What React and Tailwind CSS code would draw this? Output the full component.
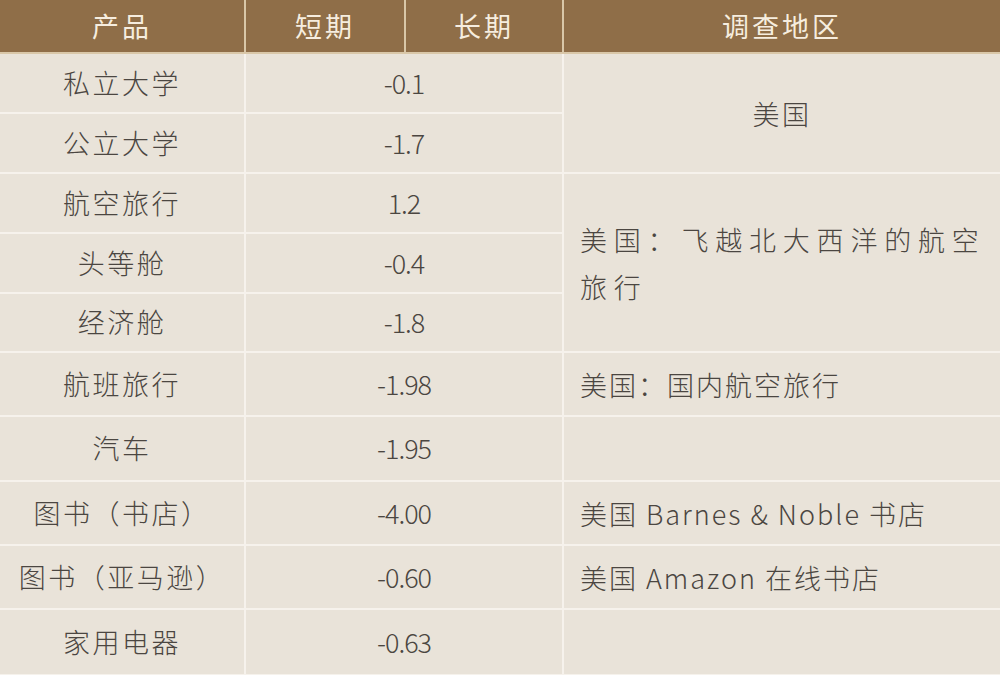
import React from 'react';

const rows = [
  { name: '私立大学', v: '-0.1', h: 'h-[60px]', region: { text: '美国', span: 2, center: true } },
  { name: '公立大学', v: '-1.7', h: 'h-[60px]' },
  { name: '航空旅行', v: '1.2', h: 'h-[60px]', region: { text: '美国：飞越北大西洋的航空旅行', span: 3, wide: true } },
  { name: '头等舱', v: '-0.4', h: 'h-[60px]' },
  { name: '经济舱', v: '-1.8', h: 'h-[59px]' },
  { name: '航班旅行', v: '-1.98', h: 'h-[64px]', region: { text: '美国：国内航空旅行', span: 1 } },
  { name: '汽车', v: '-1.95', h: 'h-[65px]', region: { text: '', span: 1 } },
  { name: '图书（书店）', v: '-4.00', h: 'h-[64px]', region: { text: '美国 Barnes & Noble 书店', span: 1 } },
  { name: '图书（亚马逊）', v: '-0.60', h: 'h-[64px]', region: { text: '美国 Amazon 在线书店', span: 1 } },
  { name: '家用电器', v: '-0.63', h: 'h-[66px]', region: { text: '', span: 1 } },
];

export default function App() {
  return (
    <div className="w-[1000px] h-[675px] overflow-hidden bg-[#e9e3d9] font-['Noto_Sans_CJK_SC','Noto_Sans',sans-serif] font-light">
      <table className="w-[1000px] table-fixed border-collapse">
        <colgroup>
          <col className="w-[245px]" />
          <col className="w-[160px]" />
          <col className="w-[158px]" />
          <col className="w-[437px]" />
        </colgroup>
        <thead>
          <tr className="h-[53px] bg-[#8f6e48] text-[#f6eddf] text-[27px] tracking-[3px]">
            <th className="font-normal border-r-2 border-b-2 border-[#d9c7a8]">产品</th>
            <th className="font-normal border-r-2 border-b-2 border-[#d9c7a8]">短期</th>
            <th className="font-normal border-r-2 border-b-2 border-[#d9c7a8]">长期</th>
            <th className="font-normal border-b-2 border-[#d9c7a8]">调查地区</th>
          </tr>
        </thead>
        <tbody className="text-[#4b4641] text-[27px] tracking-[2.5px]">
          {rows.map((r) => (
            <tr key={r.name} className={r.h}>
              <td className="text-center border-2 border-l-0 border-[#f6f2ec] whitespace-nowrap">{r.name}</td>
              <td colSpan={2} className="text-center border-2 border-[#f6f2ec] tracking-[-1px]">{r.v}</td>
              {r.region && (
                <td
                  rowSpan={r.region.span}
                  className={`border-2 border-r-0 border-[#f6f2ec] leading-[47px] ${
                    r.region.center
                      ? 'text-center'
                      : r.region.wide
                      ? 'text-left pl-[16px] pr-[4px] tracking-[6.8px]'
                      : 'text-left pl-[16px] pr-[14px] tracking-[2px]'
                  }`}
                >
                  {r.region.text}
                </td>
              )}
            </tr>
          ))}
        </tbody>
      </table>
    </div>
  );
}
